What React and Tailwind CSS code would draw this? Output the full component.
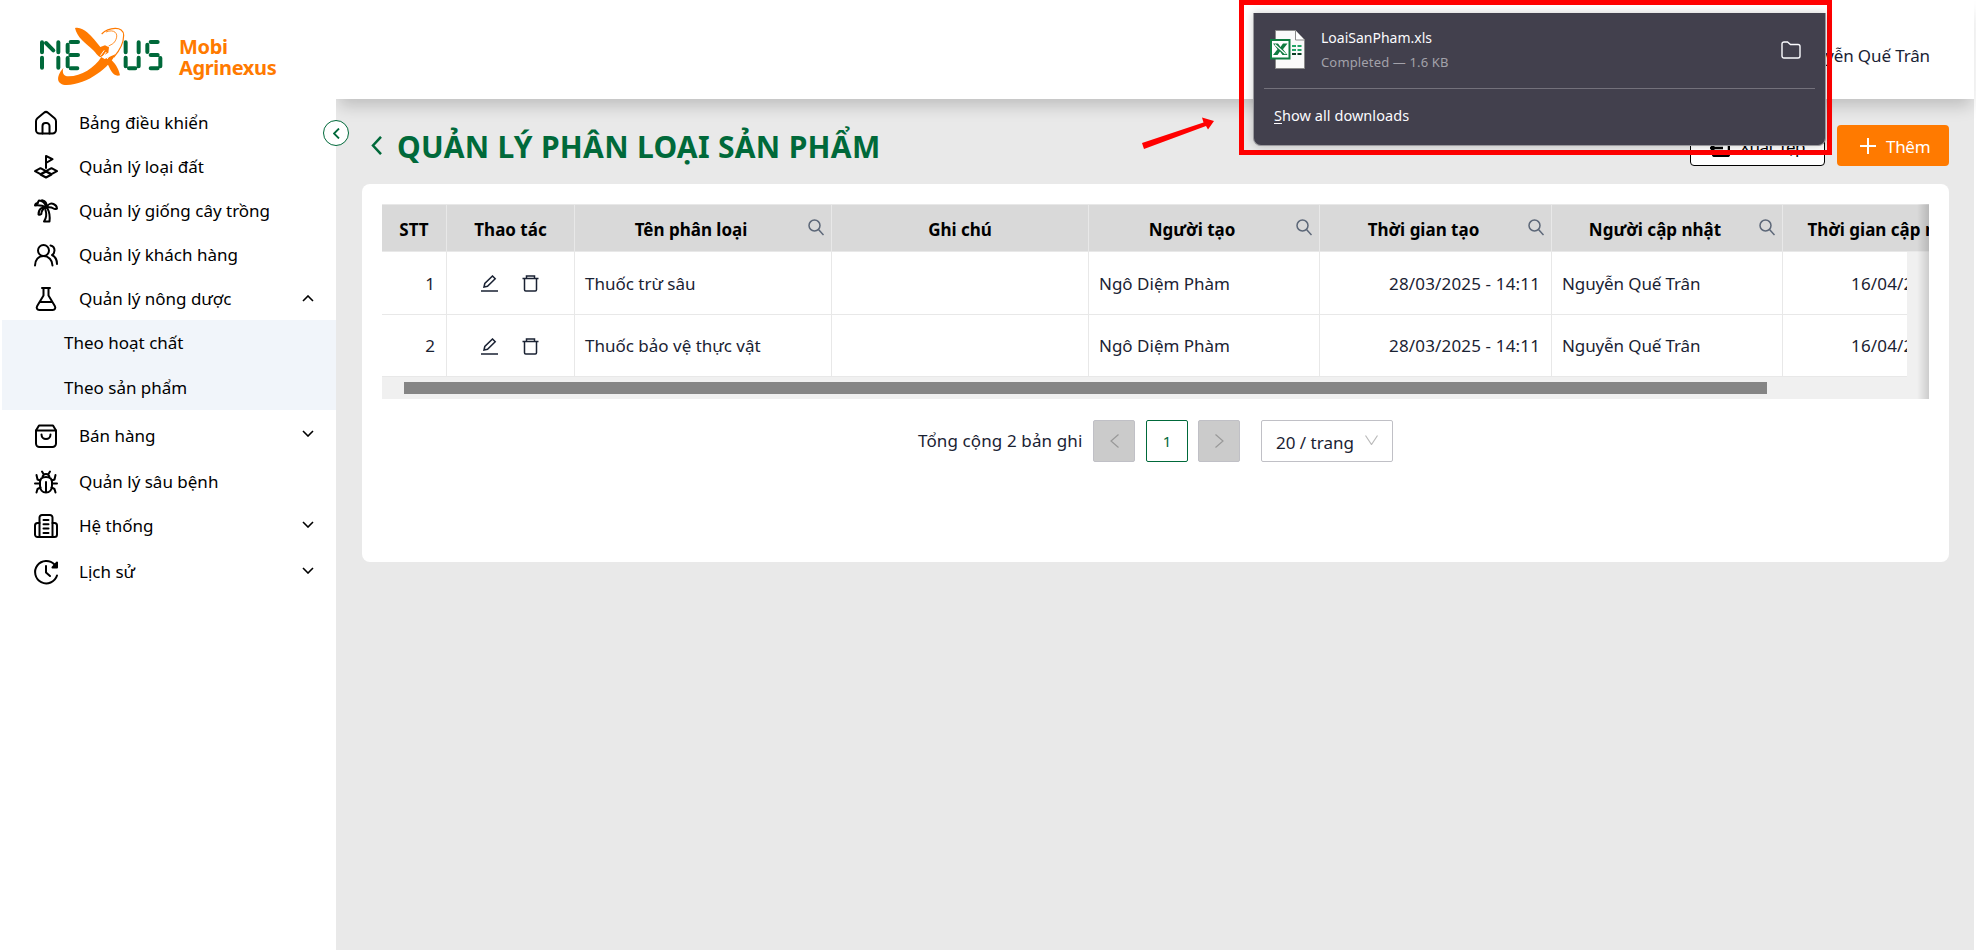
const menu = [
  { icon: 'home', label: 'Bảng điều khiển', h: 'h-11' },
  { icon: 'land', label: 'Quản lý loại đất', h: 'h-11' },
  { icon: 'palm', label: 'Quản lý giống cây trồng', h: 'h-11' },
  { icon: 'users', label: 'Quản lý khách hàng', h: 'h-11' },
  { icon: 'flask', label: 'Quản lý nông dược', h: 'h-[43px]', arrow: 'up', children: ['Theo hoạt chất', 'Theo sản phẩm'] },
  { icon: 'bag', label: 'Bán hàng', h: 'h-[51px]', arrow: 'down' },
  { icon: 'bug', label: 'Quản lý sâu bệnh', h: 'h-[42px]' },
  { icon: 'office', label: 'Hệ thống', h: 'h-[46px]', arrow: 'down' },
  { icon: 'history', label: 'Lịch sử', h: 'h-[46px]', arrow: 'down' },
]

const columns = [
  { title: 'STT', w: 'w-[65px]' },
  { title: 'Thao tác', w: 'w-[128px]' },
  { title: 'Tên phân loại', w: 'w-[257px]', search: true },
  { title: 'Ghi chú', w: 'w-[257px]' },
  { title: 'Người tạo', w: 'w-[231px]', search: true },
  { title: 'Thời gian tạo', w: 'w-[232px]', search: true },
  { title: 'Người cập nhật', w: 'w-[231px]', search: true },
  { title: 'Thời gian cập nhật', w: 'w-[231px]', search: true },
]

const rows = [
  { id: 1, name: 'Thuốc trừ sâu', creator: 'Ngô Diệm Phàm', created: '28/03/2025 - 14:11', editor: 'Nguyễn Quế Trân', updated: '16/04/2025 - 09:30' },
  { id: 2, name: 'Thuốc bảo vệ thực vật', creator: 'Ngô Diệm Phàm', created: '28/03/2025 - 14:11', editor: 'Nguyễn Quế Trân', updated: '16/04/2025 - 09:30' },
]

const icons = {
  home: (
    <>
      <path d="M2 10.2c0-1.2.5-2.2 1.4-3L10 1.700c1.2-1 2.8-1 4 0l6.600 5.500c.9.8 1.400 1.800 1.400 3V19a3.500 3.500 0 0 1-3.500 3.500h-13A3.500 3.500 0 0 1 2 19z" />
      <path d="M8.500 22.500V15a3 3 0 0 1 3-3h1a3 3 0 0 1 3 3v7.500" />
    </>
  ),
  land: (
    <>
      <path d="M12 13V1l6.500 3.200L12 8" />
      <path d="M1 16.200l5.500-3 5.500 3-5.500 3zM12 16.200l5.500-3 5.500 3-5.500 3zM6.500 19.500l5.500-3 5.500 3-5.500 3z" />
    </>
  ),
  palm: (
    <>
      <path d="M12.500 8.500C11 4 8.500 1.500 5 1.500c-1 1-1.200 1.600-1 2.500C2.300 4.200 1.200 5 1 6.500c3.500-.5 7.500 0 11.500 2" />
      <path d="M12.500 8.500C8 7.500 4.500 10 4.500 15.500c1 .3 2 .1 2.800-.5 0-3 2-5.500 5.200-6.500z" />
      <path d="M12.500 8.500C13 5 11.500 2 8 1.300M12.500 8.500c1.500-3.500 4.500-4.500 7-3.500 2 .8 3.300 2.300 3.500 4.500-1.500.8-2.500.8-3.500 0-1.500-1-4-1.500-7-1z" />
      <path d="M11.500 11c1.300 4 1 8-1.500 11.500h5.500c.5-4.500.2-9-2-13" />
    </>
  ),
  users: (
    <>
      <circle cx="9.500" cy="7.500" r="5.500" />
      <path d="M1 22.500c0-5.500 3.500-9.500 8.500-9.500s9 4 9 9.500M16.500 2.500c2.500.5 4 2.500 4 5 0 2-1 3.500-2.500 4.500 3 1.500 5 5 5 9" />
    </>
  ),
  flask: (
    <>
      <path d="M8 1h8M9.500 1v7.500L3.200 19c-1.200 2 0 4 2 4h13.600c2 0 3.200-2 2-4L14.500 8.500V1" />
      <path d="M6 15h12" />
    </>
  ),
  bag: (
    <>
      <path d="M2 6.500 5 1.500h14l3 5V19.500a3.500 3.500 0 0 1-3.500 3.500h-13A3.500 3.500 0 0 1 2 19.500z" />
      <path d="M2 6.500h20M7.500 10.500a4.500 4.500 0 0 0 9 0" />
    </>
  ),
  bug: (
    <>
      <path d="M12 22.500c-3.600 0-6-3-6-7V12c0-3 2-5 6-5s6 2 6 5v3.500c0 4-2.400 7-6 7zM12 12v10M8.500 7.500a3.500 3.500 0 0 1 7 0M9.500 4 8 1.500M14.500 4 16 1.500" />
      <path d="M6 13.500H1M23 13.500h-5M6.300 10.500 3.500 9.500 2.500 5M17.700 10.500l2.800-1 1-4.500M6.500 17.500l-3 1.500-1 3.500M17.500 17.500l3 1.500 1 3.500" />
    </>
  ),
  office: (
    <>
      <path d="M5.500 23V3.500A2.500 2.500 0 0 1 8 1h8a2.500 2.500 0 0 1 2.500 2.500V23" />
      <path d="M5.500 9H3.500A2.500 2.500 0 0 0 1 11.500v9A2.500 2.500 0 0 0 3.500 23h17a2.500 2.500 0 0 0 2.500-2.500v-9A2.500 2.500 0 0 0 20.500 9h-2" />
      <path d="M9.500 6h5M9.500 10.300h5M9.500 14.600h5M9.500 18.900h5" />
    </>
  ),
  history: (
    <>
      <path d="M20.500 4.500A11.200 11.200 0 1 0 23 15.500" />
      <path d="M12 6v6.500l4 3.500" />
      <path d="M23 2.500v5h-4.500z" fill="currentColor" />
    </>
  ),
}

function MenuIcon({ name }) {
  return (
    <svg viewBox="0 0 24 24" className="w-6 h-6 shrink-0 overflow-visible" fill="none" stroke="currentColor" strokeWidth="2" strokeLinecap="round" strokeLinejoin="round">
      {icons[name]}
    </svg>
  )
}

function Chevron({ dir }) {
  return (
    <svg viewBox="0 0 12 7" className={dir === 'up' ? 'w-3 h-[7px]' : 'w-3 h-[7px] mb-1'} fill="none" stroke="currentColor" strokeWidth="1.600">
      <path d={dir === 'up' ? 'M1 6l5-5 5 5' : 'M1 1l5 5 5-5'} />
    </svg>
  )
}

function Logo() {
  return (
    <svg viewBox="114 80 381 180" className="w-[127px] h-[60px] shrink-0" fill="none">
      <g stroke="#00693a" strokeWidth="12" strokeLinecap="round">
        <path d="M126 129v30M126 175v30M138 131l22 22M175 129v30M175 175v30" />
        <path d="M203 136v22M203 176v25M212 128h22M211 167h23M212 207h20" />
        <path d="M377 129v30M377 175v26M416 129v30M416 175v26M387 207h19" />
        <path d="M442 136v22M452 128h21M452 167h21M481 176v25M452 207h21" />
      </g>
      <path d="M225 86c12-4 26 4 38 14 14 12 26 28 38 43l14-5 12 6-2 16-24 14c-8-4-14-14-22-22-24-22-48-38-54-66z" fill="#ff7a00" />
      <path d="M330 178c14 12 26 28 30 50-10 4-20-2-26-12-5-8-8-18-14-26z" fill="#ff7a00" />
      <path d="M190 206c-4 14 0 25 16 25 38 0 78-26 98-58l10 6 32-14c-14 36-84 92-146 92-30 0-34-24-10-51z" fill="#ff7a00" />
      <path d="M305 104c20-20 66-26 66 4 0 22-12 46-30 66" stroke="#ff7a00" strokeWidth="3.500" />
      <path d="M318 98c24-10 38 4 30 22-6 14-12 14-22 20" stroke="#ff7a00" strokeWidth="2.500" />
      <path d="M302 168l10-14M308 173l10-14M315 176l8-12M322 178l6-9" stroke="#fff" strokeWidth="3" strokeLinecap="round" />
    </svg>
  )
}

function SearchIcon() {
  return (
    <svg viewBox="0 0 16 17" className="w-4 h-[17px] absolute right-[7px] top-[14px]" fill="none" stroke="#5c6778" strokeWidth="1.500">
      <circle cx="6.500" cy="6.500" r="5.500" />
      <path d="M10.500 10.500l5 5.500" />
    </svg>
  )
}

function Sidebar() {
  return (
    <aside className="w-[336px] shrink-0 bg-white relative z-10">
      <div className="h-[101px] flex items-start pt-[26px] pl-[38px]">
        <Logo />
        <div className="ml-[14px] mt-[10px] text-[20px] leading-[21px] tracking-[-0.35px] font-bold text-[#ff7a00]">
          <div>Mobi</div>
          <div>Agrinexus</div>
        </div>
      </div>
      <nav>
        {menu.map((item) => (
          <div key={item.label}>
            <div className={`${item.h} flex items-center pl-[34px] pr-[22px]`}>
              <MenuIcon name={item.icon} />
              <span className="ml-[21px] flex-1">{item.label}</span>
              {item.arrow && <Chevron dir={item.arrow} />}
            </div>
            {item.children && (
              <div className="ml-0.5 bg-[#f1f5fa] h-[90px]">
                {item.children.map((c) => (
                  <div key={c} className="h-[45px] flex items-center pl-[62px] pt-px">{c}</div>
                ))}
              </div>
            )}
          </div>
        ))}
      </nav>
      <button className="absolute left-[323px] top-[120px] w-[26px] h-[26px] rounded-full bg-white border border-[#00693a] text-[#00693a] flex items-center justify-center">
        <svg viewBox="0 0 7 11" className="w-[7px] h-[11px]" fill="none" stroke="currentColor" strokeWidth="1.800"><path d="M6 .5l-5 5 5 5" /></svg>
      </button>
    </aside>
  )
}

function Actions() {
  return (
    <div className="flex items-center gap-6 text-[#1a2233]">
      <svg viewBox="0 0 17 17" className="w-[17px] h-[17px]" fill="none" stroke="currentColor" strokeWidth="1.500">
        <path d="M0 16h17M3 12l.8-3.500L11.500 1l2.700 2.700L6.500 11.300z" />
      </svg>
      <svg viewBox="0 0 17 17" className="w-[17px] h-[17px]" fill="none" stroke="currentColor" strokeWidth="1.500">
        <path d="M.5 3.500h16M4.500 3.500V1h8v2.500M2.500 3.500v11.300a1.200 1.200 0 0 0 1.200 1.200h9.600a1.200 1.200 0 0 0 1.200-1.200V3.500" />
      </svg>
    </div>
  )
}

function Table() {
  const cell = 'h-full shrink-0 border-r border-[#e8e8e8] flex items-center pt-0.5 pl-[10px] pr-[11px]'
  return (
    <div className="relative w-[1547px] h-[195px] bg-[#f0f0f0] overflow-hidden">
      <div className="flex w-[1700px] h-12 bg-[#d9d9d9] border-y border-[#e8e8e8] font-bold text-black">
        {columns.map((c) => (
          <div key={c.title} className={`${c.w} shrink-0 relative border-r border-[#e8e8e8] flex items-center justify-center pt-[3px]`}>
            <span className={c.search ? 'mr-6' : ''}>{c.title}</span>
            {c.search && <SearchIcon />}
          </div>
        ))}
      </div>
      <div className="w-[1525px] overflow-hidden bg-white">
        {rows.map((r) => (
          <div key={r.id} className="flex w-[1700px] h-[62.500px] border-b border-[#e8e8e8] text-[#1a2233]">
            <div className={`${cell} w-[65px] justify-end`}>{r.id}</div>
            <div className={`${cell} w-[128px] justify-center`}><Actions /></div>
            <div className={`${cell} w-[257px]`}>{r.name}</div>
            <div className={`${cell} w-[257px]`}></div>
            <div className={`${cell} w-[231px]`}>{r.creator}</div>
            <div className={`${cell} w-[232px] justify-end tracking-[0.15px]`}>{r.created}</div>
            <div className={`${cell} w-[231px] tracking-[-0.12px]`}>{r.editor}</div>
            <div className={`${cell} w-[231px] justify-end tracking-[0.15px]`}>{r.updated}</div>
          </div>
        ))}
      </div>
      <div className="ml-[22px] mt-[5px] w-[1363px] h-3 bg-[#858585]"></div>
      <div className="absolute right-0 top-0 w-3 h-full bg-gradient-to-r from-transparent to-black/15"></div>
    </div>
  )
}

function Pagination() {
  const box = 'w-[42px] h-[42px] rounded-[2px] border flex items-center justify-center'
  return (
    <div className="flex items-center mt-[21px] ml-[536px] text-[#1a2233]">
      <span className="w-[165px] mr-[10px] whitespace-nowrap tracking-[0.12px]">Tổng cộng 2 bản ghi</span>
      <div className={`${box} bg-[#cbcbcb] border-[#c0c0c6] text-[#999]`}>
        <svg viewBox="0 0 9 14" className="w-[9px] h-[14px]" fill="none" stroke="currentColor" strokeWidth="1.200"><path d="M8.500.5L1 7l7.500 6.500" /></svg>
      </div>
      <div className={`${box} ml-[11px] bg-white border-[#00693a] text-[#00693a] text-[15px]`}>1</div>
      <div className={`${box} ml-[10px] bg-[#cbcbcb] border-[#c0c0c6] text-[#999]`}>
        <svg viewBox="0 0 9 14" className="w-[9px] h-[14px]" fill="none" stroke="currentColor" strokeWidth="1.200"><path d="M.5.500L8 7 .5 13.500" /></svg>
      </div>
      <div className="ml-[21px] w-[132px] h-[42px] rounded-[2px] border border-[#c0c0c6] flex items-center justify-between px-[14px]">
        <span className="pt-1">20 / trang</span>
        <svg viewBox="0 0 13 10" className="w-[13px] h-[10px] mb-0.5" fill="none" stroke="#bbb" strokeWidth="1.200"><path d="M.5.500l6 9 6-9" /></svg>
      </div>
    </div>
  )
}

function DownloadPanel() {
  return (
    <div className="absolute left-[1239px] top-0 z-20 w-[593px] h-[155px] border-[5px] border-[#ff0000] pl-[9px] pr-px pt-2">
      <div className="w-[573px] h-[133px] bg-[#42404d] rounded-b-lg border border-t-0 border-[#9a9a9e] px-[10px] text-[14px] text-[#fbfbfe] shadow-[0_0_8px_rgba(0,0,0,0.2)]">
        <div className="h-[76px] flex items-start border-b border-[#73717b] pl-1.5 pt-[17px]">
          <svg viewBox="0 0 35 39" className="w-[35px] h-[39px] shrink-0">
            <path d="M5.500.500h20l9 9.500v28.500h-29z" fill="#fafafa" stroke="#8a8a8a" />
            <path d="M25.500.500V10h9" fill="#fff" stroke="#8a8a8a" />
            <path d="M22 15h4v2h-4zM27.500 15h4v2h-4zM22 19h4v2h-4zM27.500 19h4v2h-4z" fill="#21a366" />
            <path d="M22 23h4v2h-4zM27.500 23h4v2h-4z" fill="#0b3d24" />
            <path d="M0 9h20.500v20.500H0z" fill="#107c41" />
            <path d="M2 11h16.500v16.500H2z" fill="#fff" />
            <path d="M3 13.500h5l2.500 3.500 2.500-3.500h4.500l-4.500 5.700 4.500 5.800h-5l-2.500-3.500L7.500 25H3l4.500-5.800z" fill="#107c41" />
            <path d="M5 14.500l10.500 9.500" stroke="#fff" strokeWidth="1.200" />
          </svg>
          <div className="ml-4 flex-1">
            <div className="leading-5 -mt-0.5">LoaiSanPham.xls</div>
            <div className="leading-5 mt-1 text-[#a3a2aa] text-[13px] tracking-[0.15px]">Completed — 1.6 KB</div>
          </div>
          <svg viewBox="0 0 20 18" className="w-5 h-[18px] mr-[14px] mt-[11px]" fill="none" stroke="#fbfbfe" strokeWidth="1.400">
            <path d="M1 3a2 2 0 0 1 2-2h3.500l3 2.500H17a2 2 0 0 1 2 2V15a2 2 0 0 1-2 2H3a2 2 0 0 1-2-2z" />
          </svg>
        </div>
        <div className="pl-[10px] pt-4 leading-5 text-[14.500px] tracking-[0.05px]"><u className="underline-offset-2">S</u>how all downloads</div>
      </div>
    </div>
  )
}

export default function App() {
  return (
    <div className="w-[1976px] h-[952px] bg-white overflow-hidden relative font-['Noto_Sans',sans-serif] text-[17px] leading-6 text-black">
      <div className="flex w-[1974px] h-[950px]">
        <Sidebar />
        <div className="flex-1 bg-[#e9e9e9]">
          <header className="h-[99px] bg-white shadow-[0_10px_15px_-3px_rgba(0,0,0,0.18)] flex items-start justify-end pt-11 pr-11 text-[#1a2233] tracking-[-0.12px]">
            Nguyễn Quế Trân
          </header>
          <div className="pl-[26px] pr-[25px] pt-[26px]">
            <div className="flex items-center h-[41px]">
              <svg viewBox="0 0 11 19" className="w-[11px] h-[19px] ml-[9px]" fill="none" stroke="#00693a" strokeWidth="2.500"><path d="M10 .8L2 9.500l8 8.700" /></svg>
              <h1 className="ml-[15px] mt-0.5 flex-1 text-[30px] leading-10 tracking-[0.3px] font-bold text-[#00693a]">QUẢN LÝ PHÂN LOẠI SẢN PHẨM</h1>
              <button className="w-[135px] h-[41px] bg-white border border-black rounded flex items-center justify-center gap-2.5 text-black">
                <svg viewBox="0 0 20 18" className="w-5 h-[18px] mt-1" fill="none" stroke="currentColor" strokeWidth="2.500"><path d="M3 5V3a2 2 0 0 1 2-2h12a2 2 0 0 1 2 2v12a2 2 0 0 1-2 2H5a2 2 0 0 1-2-2M13 9H2M5 5L1 9l4 4" /></svg>
                <span className="mt-0.5 tracking-[-0.5px]">Xuất Tệp</span>
              </button>
              <button className="ml-3 w-[112px] h-[41px] bg-[#ff7a00] text-white rounded flex items-center pl-[23px] gap-[10px]">
                <svg viewBox="0 0 16 16" className="w-4 h-4" stroke="#fff" strokeWidth="2"><path d="M8 0v16M0 8h16" /></svg>
                <span className="mt-0.5 tracking-[-0.3px]">Thêm</span>
              </button>
            </div>
            <div className="mt-[18px] h-[378px] bg-white rounded-lg pl-5 pt-5">
              <Table />
              <Pagination />
            </div>
          </div>
        </div>
      </div>
      {/* pointer to the download popup */}
      <svg viewBox="0 0 74 36" className="absolute left-[1141px] top-[116px] w-[74px] h-9 z-20"><path d="M1 27L62.500 6.500l-1.500-5L73 5l-6 8.500-2-3.500L3 33z" fill="#ff0000" /></svg>
      <DownloadPanel />
    </div>
  )
}
